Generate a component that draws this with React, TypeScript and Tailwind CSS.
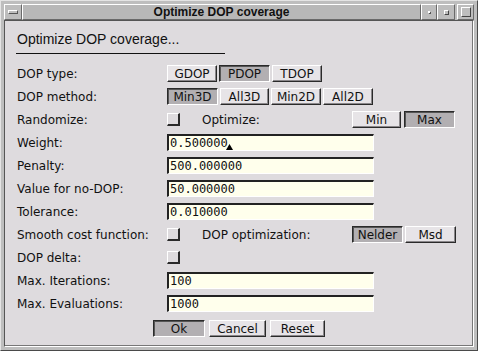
import React from 'react';

// Motif-style "Optimize DOP coverage" dialog

const UI = "font-['DejaVu_Sans',sans-serif]";

const Btn = ({ label, on, w }: { label: string; on?: boolean; w: string }) => (
  <div
    className={`${w} h-[17px] flex items-center justify-center text-[12px] leading-none text-[#111] border ${
      on
        ? 'bg-[#b2afb2] border-t-[#2a2a2a] border-l-[#2a2a2a] border-r-white border-b-white shadow-[inset_1px_1px_0_#555]'
        : 'bg-[#e7e4e7] border-t-white border-l-white border-r-[#2a2a2a] border-b-[#2a2a2a] shadow-[inset_-1px_-1px_0_#8a878a]'
    }`}
  >
    {label}
  </div>
);

const Check = () => (
  <div className="w-[13px] h-[13px] bg-[#dedbde] border-t border-l border-white border-r-2 border-b-2 border-r-[#2a2a2a] border-b-[#2a2a2a]" />
);

const Field = ({ value, cursor }: { value: string; cursor?: boolean }) => (
  <div className="relative w-[207px] h-[17px] bg-[#ffffec] border-t-2 border-l-2 border-t-[#222] border-l-[#222] border-r border-b border-r-white border-b-white flex items-center pl-[1px] font-['DejaVu_Sans_Mono',monospace] text-[12px] text-[#111]">
    {value}
    {cursor && (
      <svg className="absolute left-[57px] top-[8px]" width="7" height="6" viewBox="0 0 7 6">
        <polygon points="0,6 3.5,0 7,6" fill="#000" />
      </svg>
    )}
  </div>
);

const Row = ({ label, children }: { label: string; children?: React.ReactNode }) => (
  <div className="h-[23px] flex items-center">
    <div className="w-[150px] text-[12px] text-[#111] whitespace-nowrap">{label}</div>
    {children}
  </div>
);

const TitleBtn = ({ w, children }: { w: string; children?: React.ReactNode }) => (
  <div className={`${w} h-full flex items-center justify-center bg-[#bdbdbd] border border-t-white border-l-white border-r-[#6a6a6a] border-b-[#6a6a6a]`}>
    {children}
  </div>
);

export default function App() {
  return (
    <div className={`${UI} w-[478px] h-[351px] bg-[#bebebe] border border-t-[#e4e4e4] border-l-[#e4e4e4] border-r-[#4a4a4a] border-b-[#4a4a4a] p-[3px] flex flex-col`}>
      {/* title bar */}
      <div className="h-[16px] flex shrink-0">
        <TitleBtn w="w-[18px]">
          <div className="w-[10px] h-[4px] border border-t-white border-l-white border-r-[#555] border-b-[#555]" />
        </TitleBtn>
        <div className="flex-1 h-full flex items-center justify-center bg-[#b8b8b8] border border-t-white border-l-white border-r-[#6a6a6a] border-b-[#6a6a6a] font-['Liberation_Sans',Arial,sans-serif] font-bold text-[12px] text-[#111]">
          Optimize DOP coverage
        </div>
        <TitleBtn w="w-[16px]">
          <div className="w-[2px] h-[2px] bg-white shadow-[1px_1px_0_#555]" />
        </TitleBtn>
        <TitleBtn w="w-[18px]">
          <div className="w-[5px] h-[5px] border border-t-white border-l-white border-r-[#444] border-b-[#444]" />
        </TitleBtn>
        <div className="w-[2px]" />
        <TitleBtn w="w-[17px]">
          <div className="w-[10px] h-[10px] border border-t-white border-l-white border-r-[#444] border-b-[#444]" />
        </TitleBtn>
      </div>

      {/* client area */}
      <div className="flex-1 bg-[#dedbde] border border-t-[#555] border-l-[#555] border-r-white border-b-white shadow-[inset_-1px_-1px_0_#777] pl-[12px] pt-[10px] flex flex-col">
        <div className="h-[16px] leading-[16px] font-['Liberation_Sans',Arial,sans-serif] text-[14px] text-[#111]">
          Optimize DOP coverage...
        </div>
        <div className="mt-[6px] -ml-px w-[209px] h-px bg-[#111]" />

        <div className="mt-[8px] flex flex-col">
          <Row label="DOP type:">
            <div className="flex gap-[2px]">
              <Btn label="GDOP" w="w-[50px]" />
              <Btn label="PDOP" on w="w-[51px]" />
              <Btn label="TDOP" w="w-[50px]" />
            </div>
          </Row>
          <Row label="DOP method:">
            <div className="flex gap-[2px]">
              <Btn label="Min3D" on w="w-[51px]" />
              <Btn label="All3D" w="w-[49px]" />
              <Btn label="Min2D" w="w-[50px]" />
              <Btn label="All2D" w="w-[50px]" />
            </div>
          </Row>
          <Row label="Randomize:">
            <div className="w-[35px]">
              <Check />
            </div>
            <div className="w-[150px] text-[12px] text-[#111]">Optimize:</div>
            <div className="flex gap-[3px]">
              <Btn label="Min" w="w-[49px]" />
              <Btn label="Max" on w="w-[51px]" />
            </div>
          </Row>
          <Row label="Weight:">
            <Field value="0.500000" cursor />
          </Row>
          <Row label="Penalty:">
            <Field value="500.000000" />
          </Row>
          <Row label="Value for no-DOP:">
            <Field value="50.000000" />
          </Row>
          <Row label="Tolerance:">
            <Field value="0.010000" />
          </Row>
          <Row label="Smooth cost function:">
            <div className="w-[35px]">
              <Check />
            </div>
            <div className="w-[150px] text-[12px] text-[#111]">DOP optimization:</div>
            <div className="flex gap-[2px]">
              <Btn label="Nelder" on w="w-[51px]" />
              <Btn label="Msd" w="w-[51px]" />
            </div>
          </Row>
          <Row label="DOP delta:">
            <Check />
          </Row>
          <Row label="Max. Iterations:">
            <Field value="100" />
          </Row>
          <Row label="Max. Evaluations:">
            <Field value="1000" />
          </Row>
        </div>

        <div className="mt-[5px] ml-[136px] flex gap-[4px]">
          <Btn label="Ok" on w="w-[52px]" />
          <Btn label="Cancel" w="w-[57px]" />
          <Btn label="Reset" w="w-[55px]" />
        </div>
      </div>
    </div>
  );
}
